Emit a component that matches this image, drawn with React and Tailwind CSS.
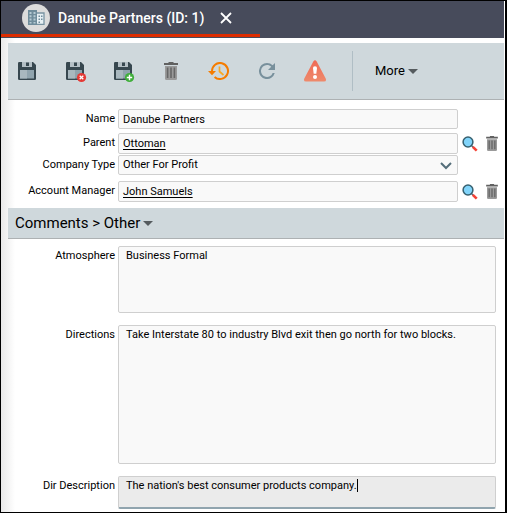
import React, { useState } from 'react';

const SaveIcon = ({ badge }) => (
  <svg width="22" height="22" viewBox="0 0 22 22" className="-mr-1 -mb-1">
    <path d="M0 1.2Q0 0 1.2 0H15l3 3v13.8q0 1.2-1.2 1.2H1.2Q0 18 0 16.800z" fill="#37474f" />
    <rect x="4" y="0" width="10" height="5" fill="#b4bfc5" />
    <rect x="8" y="0.500" width="3" height="3.500" fill="#37474f" />
    <rect x="2" y="8" width="14" height="8.500" fill="#90a4ae" />
    <path d="M2 8h7v8.500H2z" fill="#a9b8bf" />
    {badge === 'close' && (
      <g>
        <circle cx="15.500" cy="15.500" r="4.600" fill="#e53935" />
        <path d="M13.700 13.700l3.600 3.600M17.300 13.700l-3.600 3.600" stroke="#fff" strokeWidth="1.300" />
      </g>
    )}
    {badge === 'add' && (
      <g>
        <circle cx="15.500" cy="15.500" r="4.600" fill="#3fae3a" />
        <path d="M15.500 12.800v5.400M12.800 15.500h5.400" stroke="#fff" strokeWidth="1.400" />
      </g>
    )}
  </svg>
);

const TrashIcon = ({ width = 14, height = 18 }) => (
  <svg width={width} height={height} viewBox="0 0 14 18">
    <path d="M0 1h4.500V0h5v1H14v2H0z" fill="#616161" />
    <path d="M1 4h12v12.500Q13 18 11.500 18h-9Q1 18 1 16.500z" fill="#9a9a9a" />
    <path d="M3.600 5.500v10.500M7 5.500v10.500M10.400 5.500v10.500" stroke="#666" strokeWidth="1.600" />
  </svg>
);

const HistoryIcon = () => (
  <svg width="22" height="18" viewBox="0 0 22 18">
    <path d="M4 10V9a8 8 0 1 1 2.600 5.900" fill="none" stroke="#f57c00" strokeWidth="2" />
    <path d="M0 9h8l-4 4.200z" fill="#f57c00" />
    <path d="M11.500 4.500v5l4 3.500" fill="none" stroke="#f9a825" strokeWidth="1.700" />
  </svg>
);

const RefreshIcon = () => (
  <svg width="16" height="16" viewBox="4 4 16 16">
    <path
      d="M17.650 6.350A7.960 7.960 0 0 0 12 4a8 8 0 1 0 7.730 10h-2.080A6 6 0 1 1 12 6c1.660 0 3.140.690 4.220 1.780L13 11h7V4z"
      fill="#78909c"
    />
  </svg>
);

const AlertIcon = () => (
  <svg width="24" height="22" viewBox="0 0 24 22">
    <defs>
      <linearGradient id="alert" x1="0" y1="0" x2="0" y2="1">
        <stop offset="0" stopColor="#ef6a56" />
        <stop offset="1" stopColor="#ee8a6c" />
      </linearGradient>
    </defs>
    <path d="M10.300 1.500q1.700-2.400 3.400 0l9 17q1.200 3-1.700 3H3q-2.900 0-1.700-3z" fill="url(#alert)" />
    <path d="M12 6.300q2.200 0 2 2l-.7 5.500h-2.600l-.7-5.500q-.2-2 2-2z" fill="#fff" />
    <circle cx="12" cy="17" r="2" fill="#fff" />
  </svg>
);

const SearchIcon = () => (
  <svg width="16" height="16" viewBox="0 0 16 16">
    <path d="M9 9l2.500 2.500" stroke="#546e7a" strokeWidth="1.500" />
    <path d="M10.800 10.800l3.900 3.900" stroke="#f44336" strokeWidth="2.600" />
    <circle cx="6" cy="6" r="4.900" fill="#81d4fa" stroke="#37606f" strokeWidth="1.500" />
  </svg>
);

const BuildingIcon = () => (
  <svg width="17" height="15" viewBox="0 0 17 15">
    <path d="M8 3h8v11.500H8z" fill="#e8f1f5" stroke="#7893a1" strokeWidth="1.300" />
    <path d="M0 0h9v15H0z" fill="#6f8c9b" />
    <path d="M1.500 2h2v2h-2zM5.500 2h2v2h-2zM1.500 5.300h2v2h-2zM5.500 5.300h2v2h-2zM1.500 8.600h2v2h-2zM5.500 8.600h2v2h-2zM1.500 12h2v1.500h-2zM5.500 12h2v1.500h-2z" fill="#b5cad4" />
    <path d="M10.500 5.500h1.500V7h-1.500zM13 5.500h1.500V7H13zM10.500 8.500h1.500V10h-1.500zM13 8.500h1.500V10H13zM10.500 11.500h1.500V13h-1.500z" fill="#6f8c9b" />
  </svg>
);

const Caret = () => (
  <svg width="10" height="5" viewBox="0 0 10 5">
    <path d="M0 0h10L5 5z" fill="#555b5e" />
  </svg>
);

const tools = [
  { name: 'Save', icon: <SaveIcon /> },
  { name: 'Save and close', icon: <SaveIcon badge="close" /> },
  { name: 'Save and new', icon: <SaveIcon badge="add" /> },
  { name: 'Delete', icon: <TrashIcon /> },
  { name: 'History', icon: <HistoryIcon /> },
  { name: 'Refresh', icon: <RefreshIcon /> },
  { name: 'Alert', icon: <AlertIcon /> },
];

const Label = ({ htmlFor, children }) => (
  <label htmlFor={htmlFor} className="w-[107px] shrink-0 text-right leading-5">
    {children}
  </label>
);

const LookupRow = ({ id, label, value }) => (
  <div className="flex gap-[3px]">
    <span id={id} className="w-[107px] shrink-0 text-right leading-5">
      {label}
    </span>
    <div
      role="group"
      aria-labelledby={id}
      className="h-[21px] flex-1 rounded-xs border border-[#cfcfcf] bg-[#f9f9f9] px-1 leading-5"
    >
      <a href="#" className="underline underline-offset-2">
        {value}
      </a>
    </div>
    <div className="flex w-[43px] items-center gap-2 pl-px">
      <button type="button" aria-label={`Find ${label}`}>
        <SearchIcon />
      </button>
      <button type="button" aria-label={`Clear ${label}`}>
        <TrashIcon width={12} height={15} />
      </button>
    </div>
  </div>
);

const App = () => {
  const [name, setName] = useState('Danube Partners');
  const [atmosphere, setAtmosphere] = useState('Business Formal');
  const [directions, setDirections] = useState(
    'Take Interstate 80 to industry Blvd exit then go north for two blocks.'
  );
  const [description, setDescription] = useState("The nation's best consumer products company.");

  return (
    <div className="border border-r-2 border-black bg-white font-[Roboto,sans-serif] text-[11px] text-black">
      <header className="mr-px h-[37px] bg-[#474b5b]">
        <div className="flex h-9 w-[259px] items-center border-b-3 border-[#dd2c00] pl-[21px] text-white">
          <span className="flex size-7 items-center justify-center rounded-full bg-[#dcdcdc]">
            <BuildingIcon />
          </span>
          <h1 className="ml-2 text-sm font-medium">Danube Partners (ID: 1)</h1>
          <button type="button" aria-label="Close tab" className="ml-4">
            <svg width="12" height="12" viewBox="0 0 12 12">
              <path d="M1 1l10 10M11 1L1 11" stroke="#fff" strokeWidth="1.800" />
            </svg>
          </button>
        </div>
      </header>

      <main className="bg-[linear-gradient(to_right,#e9e9e9,#ffffff_14px)] pt-[5px] pr-px pb-[3px] pl-[7px]">
        <div className="flex h-[57px] items-center border-b border-[#adb1b3] bg-[#cfd8dc]">
          <div className="flex gap-[10px]">
            {tools.map(({ name: tool, icon }) => (
              <button key={tool} type="button" aria-label={tool} className="flex h-10 w-[38px] items-center justify-center">
                {icon}
              </button>
            ))}
          </div>
          <div className="ml-[18px] h-10 border-l border-[#b0bec5]" />
          <button type="button" className="ml-[22px] flex items-center gap-[3px] text-[13px]">
            More
            <Caret />
          </button>
        </div>

        <form>
          <div className="flex gap-[3px] pt-[9px]">
            <Label htmlFor="name">Name</Label>
            <input
              id="name"
              type="text"
              value={name}
              onChange={(e) => setName(e.target.value)}
              className="mr-[46px] h-5 min-w-0 flex-1 rounded-xs border border-[#cfcfcf] bg-[#f9f9f9] px-1"
            />
          </div>
          <div className="pt-1">
            <LookupRow id="parent" label="Parent" value="Ottoman" />
          </div>
          <div className="flex gap-[3px] pt-px">
            <Label htmlFor="type">Company Type</Label>
            <div className="relative mr-[46px] flex-1">
              <select
                id="type"
                className="block h-5 w-full appearance-none rounded-xs border border-[#cfcfcf] bg-[#f9f9f9] px-1"
              >
                <option>Other For Profit</option>
              </select>
              <svg width="12" height="8" viewBox="0 0 12 8" className="pointer-events-none absolute top-[7px] right-[6px]">
                <path d="M1 1l5 5 5-5" fill="none" stroke="#546e7a" strokeWidth="2" />
              </svg>
            </div>
          </div>
          <div className="pt-[6px]">
            <LookupRow id="manager" label="Account Manager" value="John Samuels" />
          </div>

          <h2 className="mt-[6px] h-[31px] border-b border-[#adb1b3] bg-[#cfd8dc] pl-[7px]">
            <button type="button" className="flex h-[30px] items-center gap-[3px] text-[15px]">
              Comments &gt; Other
              <Caret />
            </button>
          </h2>

          <div className="flex flex-col gap-3 pt-[7px] pr-2">
            <div className="flex gap-[3px]">
              <Label htmlFor="atmosphere">Atmosphere</Label>
              <textarea
                id="atmosphere"
                value={atmosphere}
                onChange={(e) => setAtmosphere(e.target.value)}
                className="h-[67px] min-w-0 flex-1 resize-none rounded-xs border border-[#cfcfcf] bg-[#f9f9f9] px-[7px] leading-[18px]"
              />
            </div>
            <div className="flex gap-[3px]">
              <Label htmlFor="directions">Directions</Label>
              <textarea
                id="directions"
                value={directions}
                onChange={(e) => setDirections(e.target.value)}
                className="h-[139px] min-w-0 flex-1 resize-none rounded-xs border border-[#cfcfcf] bg-[#f9f9f9] px-[7px] leading-[18px]"
              />
            </div>
            <div className="flex gap-[3px]">
              <Label htmlFor="description">Dir Description</Label>
              <div className="relative flex-1">
                <textarea
                  id="description"
                  value={description}
                  onChange={(e) => setDescription(e.target.value)}
                  className="block h-[33px] w-full resize-none rounded-xs border border-b-2 border-[#cfcfcf] border-b-[#90a4ae] bg-[#ebebeb] px-[7px] leading-[18px] caret-transparent"
                />
                <span className="absolute top-[3px] left-[239px] h-[13px] w-px bg-black" />
              </div>
            </div>
          </div>
        </form>
      </main>
    </div>
  );
};

export default App;
